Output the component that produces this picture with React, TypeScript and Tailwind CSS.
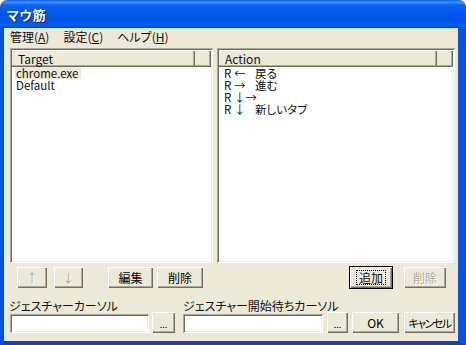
import React from "react";

const raised =
  "bg-[#ECE9D8] shadow-[inset_1px_1px_#ffffff,inset_-1px_-1px_#716F64,inset_-2px_-2px_#ACA899]";
const sunken =
  "shadow-[inset_1px_1px_#ACA899,inset_-1px_-1px_#ffffff,inset_2px_2px_#716F64,inset_-2px_-2px_#F1EFE2]";
const disabledText = "text-[#ACA899] [text-shadow:1px_1px_#ffffff]";

function Btn({
  w,
  children,
  disabled,
  focused,
  className = "",
}: {
  w: string;
  children?: React.ReactNode;
  disabled?: boolean;
  focused?: boolean;
  className?: string;
}) {
  return (
    <div
      className={`${w} h-[21px] shrink-0 flex items-center justify-center whitespace-nowrap ${raised} ${
        focused ? "outline outline-1 outline-black" : ""
      } ${className}`}
    >
      {focused ? (
        <span className="border border-dotted border-black px-[2px] leading-[12px] h-[15px] flex items-center">
          {children}
        </span>
      ) : (
        <span className={`leading-[12px] ${disabled ? disabledText : "text-black"}`}>{children}</span>
      )}
    </div>
  );
}

function Header({ w, children }: { w: string; children?: React.ReactNode }) {
  return (
    <div
      className={`${w} h-[17px] flex items-center pl-[6px] bg-[#ECE9D8] shadow-[inset_0_1px_#ffffff,inset_-1px_-1px_#716F64,inset_-2px_-2px_#ACA899]`}
    >
      <span className="leading-[12px]">{children}</span>
    </div>
  );
}

export default function App() {
  return (
    <div className="w-[466px] h-[345px] bg-white font-['Noto_Sans_CJK_JP','Liberation_Sans',sans-serif] [font-feature-settings:'palt'] text-[12px] text-[#111] select-none">
      <div className="w-[466px] h-[345px] flex flex-col">
        {/* title bar */}
        <div className="h-[28px] shrink-0 rounded-t-[7px] flex items-center pl-[7px] pt-[1px] bg-[linear-gradient(to_bottom,#0A5BE8_0%,#3F94FF_8%,#0C63F2_18%,#0058EE_45%,#0055EA_75%,#0062F6_90%,#0046D2_100%)]">
          <span className="text-white font-bold text-[13px] leading-[14px] tracking-[0.5px] [text-shadow:1px_1px_#0A1E8C]">
            マウ筋
          </span>
        </div>
        {/* body */}
        <div className="flex-1 flex flex-col border-l-[4px] border-r-[8px] border-b-[4px] border-l-[#0553E6] border-r-[#0553E6] border-b-[#0546D4] bg-[#ECE9D8]">
          {/* menu */}
          <div className="h-[18px] flex items-center pl-[6px] gap-[14px] leading-[12px]">
            <span>
              管理(<span className="underline underline-offset-1">A</span>)
            </span>
            <span>
              設定(<span className="underline underline-offset-1">C</span>)
            </span>
            <span>
              ヘルプ(<span className="underline underline-offset-1">H</span>)
            </span>
          </div>
          {/* lists */}
          <div className="flex mt-[2px] pl-[6px] gap-[4px]">
            <div className={`w-[203px] h-[215px] bg-white p-[2px] flex flex-col ${sunken}`}>
              <div className="flex">
                <Header w="w-[183px]">Target</Header>
                <Header w="flex-1" />
              </div>
              <div className="flex flex-col pl-[3px] text-[11.5px] leading-[12px]">
                <div className="h-[12px] flex items-center">
                  <span className="bg-[#ECE9D8] pl-[1px] pr-[3px] h-[12px] flex items-center">chrome.exe</span>
                </div>
                <div className="h-[12px] flex items-center pl-[1px]">Default</div>
              </div>
            </div>
            <div className={`w-[238px] h-[215px] bg-white p-[2px] flex flex-col ${sunken}`}>
              <div className="flex">
                <Header w="w-[218px]">Action</Header>
                <Header w="flex-1" />
              </div>
              <div className="flex flex-col pl-[5px] text-[11.5px] leading-[12px]">
                <div className="h-[12px] flex items-center">
                  <span className="w-[31px] whitespace-pre">R ←</span>
                  <span>戻る</span>
                </div>
                <div className="h-[12px] flex items-center">
                  <span className="w-[31px] whitespace-pre">R →</span>
                  <span>進む</span>
                </div>
                <div className="h-[12px] flex items-center">
                  <span className="whitespace-pre">R ↓→</span>
                </div>
                <div className="h-[12px] flex items-center">
                  <span className="w-[31px] whitespace-pre">R ↓</span>
                  <span>新しいタブ</span>
                </div>
              </div>
            </div>
          </div>
          {/* buttons row */}
          <div className="flex mt-[4px] pl-[13px] pr-[12px] h-[21px]">
            <Btn w="w-[30px]" disabled>
              ↑
            </Btn>
            <Btn w="w-[29px]" disabled className="ml-[7px]">
              ↓
            </Btn>
            <Btn w="w-[45px]" className="ml-[25px]">
              編集
            </Btn>
            <Btn w="w-[46px]" className="ml-[4px]">
              削除
            </Btn>
            <Btn w="w-[42px]" focused className="ml-auto">
              追加
            </Btn>
            <Btn w="w-[42px]" disabled className="ml-[12px]">
              削除
            </Btn>
          </div>
          {/* bottom */}
          <div className="flex items-end mt-[12px] pl-[6px]">
            <div className="flex flex-col">
              <div className="h-[12px] leading-[12px] -ml-[1px] whitespace-nowrap">ジェスチャーカーソル</div>
              <div className="flex items-end h-[21px]">
                <div className={`w-[139px] h-[19px] bg-white ${sunken}`} />
                <Btn w="w-[23px]" className="ml-[3px]">
                  <span className="text-[9px] leading-[9px]">...</span>
                </Btn>
              </div>
            </div>
            <div className="flex flex-col ml-[8px]">
              <div className="h-[12px] leading-[12px] whitespace-nowrap">ジェスチャー開始待ちカーソル</div>
              <div className="flex items-end h-[21px]">
                <div className={`w-[140px] h-[19px] bg-white ${sunken}`} />
                <Btn w="w-[21px]" className="ml-[4px]">
                  <span className="text-[9px] leading-[9px]">...</span>
                </Btn>
              </div>
            </div>
            <Btn w="w-[47px]" className="ml-[4px]">
              OK
            </Btn>
            <Btn w="w-[51px]" className="ml-[5px]">
              <span className="text-[11px] tracking-[-1.5px]">キャンセル</span>
            </Btn>
          </div>
        </div>
      </div>
    </div>
  );
}
